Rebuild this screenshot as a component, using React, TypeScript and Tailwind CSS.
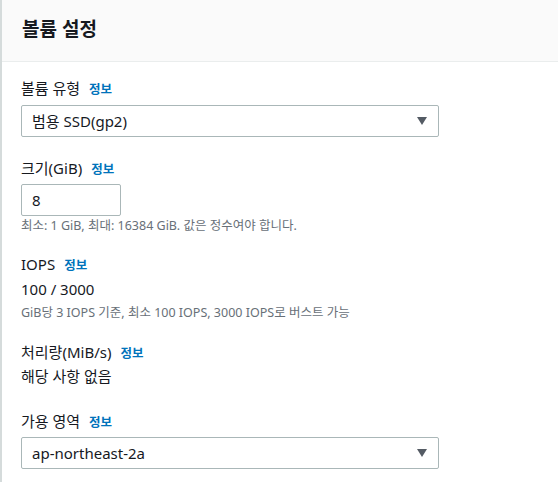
import { ReactNode } from "react";

const font = { fontFamily: '"Noto Sans", "Noto Sans CJK KR", sans-serif' };

function Info() {
  return <span className="ml-[9px] text-[12.5px] font-bold text-[#0073bb]">정보</span>;
}

function Label({ children }: { children: ReactNode }) {
  return (
    <div className="flex items-baseline text-[15px] leading-[22px] text-[#16191f]">
      <span>{children}</span>
      <Info />
    </div>
  );
}

function Select({ value, className = "mt-[4px]" }: { value: string; className?: string }) {
  return (
    <div
      className={`${className} flex h-[32px] w-[418px] items-center justify-between rounded-[2px] border border-[#aab7b8] bg-white pl-[10px] pr-[11px] text-[15px] text-[#16191f]`}
    >
      <span>{value}</span>
      <svg width="10" height="8" viewBox="0 0 10 8">
        <path d="M0 0h10L5 8z" fill="#545b64" />
      </svg>
    </div>
  );
}

function Hint({ children, className = "mt-[2px]" }: { children: ReactNode; className?: string }) {
  return <p className={`${className} text-[12.5px] leading-[16px] text-[#687078]`}>{children}</p>;
}

export default function App() {
  return (
    <div className="min-h-[482px] w-[558px] border-l-2 border-[#d5dbdb] bg-white" style={font}>
      <div className="flex h-[62px] items-center border-b border-[#eaeded] bg-[#fafafa] px-[20px] pb-[2px]">
        <h2 className="text-[19px] font-bold text-[#16191f]">볼륨 설정</h2>
      </div>

      <div className="px-[19px] pt-[15px]">
        <Label>볼륨 유형</Label>
        <Select value="범용 SSD(gp2)" />

        <div className="mt-[20px]">
          <Label>크기(GiB)</Label>
          <div className="mt-[3px] flex h-[32px] w-[100px] items-center rounded-[2px] border border-[#aab7b8] pl-[10px] text-[15px] text-[#16191f]">
            8
          </div>
          <Hint>최소: 1 GiB, 최대: 16384 GiB. 값은 정수여야 합니다.</Hint>
        </div>

        <div className="mt-[19px]">
          <Label>IOPS</Label>
          <p className="mt-[1px] text-[15px] leading-[22px] text-[#16191f]">100 / 3000</p>
          <Hint className="mt-[5px]">GiB당 3 IOPS 기준, 최소 100 IOPS, 3000 IOPS로 버스트 가능</Hint>
        </div>

        <div className="mt-[20px]">
          <Label>처리량(MiB/s)</Label>
          <p className="text-[15px] leading-[22px] text-[#16191f]">해당 사항 없음</p>
        </div>

        <div className="mt-[23px]">
          <Label>가용 영역</Label>
          <Select value="ap-northeast-2a" className="mt-[3px]" />
        </div>
      </div>
    </div>
  );
}
